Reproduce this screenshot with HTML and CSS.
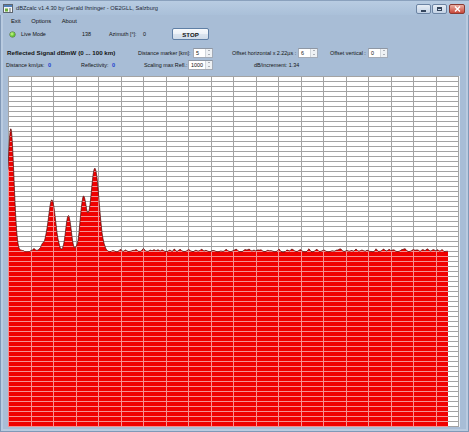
FILE: index.html
```html
<!DOCTYPE html>
<html lang="en">
<head>
  <meta charset="UTF-8">
  <title>dBZcalc</title>
  <link rel="stylesheet" href="styles.css">
</head>
<body>
  <div class="window">
    <!-- Title bar -->
    <div class="titlebar">
      <svg class="app-icon" width="10" height="9" viewBox="0 0 10 9">
        <rect x="0.5" y="0.5" width="9" height="8" fill="#f4f6f8" stroke="#5d6670"/>
        <rect x="1" y="1" width="8" height="2" fill="#4f7fb8"/>
        <rect x="2" y="4.5" width="3" height="3" fill="#6cae3c"/>
        <rect x="6" y="4.5" width="2" height="1" fill="#5d6670"/>
        <rect x="6" y="6.5" width="2" height="1" fill="#5d6670"/>
      </svg>
      <span class="title">dBZcalc v1.4.30 by Gerald Ihninger - OE2GLL, Salzburg</span>
      <div class="caption-buttons">
        <span class="cap-btn cap-min"><i></i></span>
        <span class="cap-btn cap-max"><i></i></span>
        <span class="cap-btn cap-close">
          <svg width="7" height="6" viewBox="0 0 7 6"><path d="M1 0.5 L6 5.5 M6 0.5 L1 5.5" stroke="#fff" stroke-width="1.4"/></svg>
        </span>
      </div>
    </div>

    <!-- Menu -->
    <div class="menubar">
      <span>Exit</span>
      <span>Options</span>
      <span>About</span>
    </div>

    <!-- Live mode row -->
    <div class="row row-live">
      <span class="led"></span>
      <span class="live-label">Live Mode</span>
      <span class="count">138</span>
      <span class="az-label">Azimuth [°]:</span>
      <span class="az-value">0</span>
      <button class="stop-btn">STOP</button>
    </div>

    <!-- Signal row -->
    <div class="row row-signal">
      <span class="signal-title">Reflected Signal dBmW (0 ... 100 km)</span>
      <span class="marker-label">Distance marker [km]:</span>
      <div class="spin"><span class="spin-val">5</span><span class="spin-arrows"><i class="up"></i><i class="down"></i></span></div>
      <span class="hoff-label">Offset horizontal x 2.22µs :</span>
      <div class="spin"><span class="spin-val">6</span><span class="spin-arrows"><i class="up"></i><i class="down"></i></span></div>
      <span class="voff-label">Offset vertical :</span>
      <div class="spin"><span class="spin-val">0</span><span class="spin-arrows"><i class="up"></i><i class="down"></i></span></div>
    </div>

    <!-- Info row -->
    <div class="row row-info">
      <span class="dist-label">Distance km/µs:</span>
      <span class="value dist-value">0</span>
      <span class="refl-label">Reflectivity:</span>
      <span class="value refl-value">0</span>
      <span class="scale-label">Scaling max Refl.:</span>
      <div class="spin spin-wide"><span class="spin-val">1000</span><span class="spin-arrows"><i class="up"></i><i class="down"></i></span></div>
      <span class="incr-label">dB/increment: 1.34</span>
    </div>

    <!-- Chart -->
    <div class="chart" id="chart"></div>
  </div>

  <script>
    // Build the reflection chart
    function buildChart() {
      const W = 451, H = 351, END = 440;
      let seed = 12345;
      function rnd() {
        seed = (seed * 16807) % 2147483647;
        return seed / 2147483647;
      }

      // echo peaks: [center, height, width]
      const peaks = [[2.8, 123, 3.1], [36, 5, 4], [44, 51, 3.5], [60.3, 35, 2.6], [75.5, 54, 3], [87, 82, 4.1]];

      // small clutter bumps along the noise floor
      for (let x = 14; x < END; x += 3 + rnd() * 6) {
        peaks.push([x, 0.6 + rnd() * 2.2, 0.8 + rnd() * 0.8]);
      }

      function level(x) {
        let y = 175.5;
        peaks.forEach(([c, a, s]) => {
          y -= a * Math.exp(-((x - c) * (x - c)) / (2 * s * s));
        });
        return y;
      }

      const pts = [];
      let jitter = 0;
      for (let x = 0; x <= END; x += (x < 105 ? 0.5 : 1)) {
        jitter = jitter * 0.5 + (rnd() - 0.5) * 0.6;
        const y = level(x) + (x > 11 ? jitter : 0);
        pts.push(x.toFixed(1) + "," + y.toFixed(1));
      }

      const line = "M" + pts.join(" L");
      const area = "M0," + H + " L" + pts.join(" L") + " L" + END + "," + H + " Z";

      let grid = "";
      for (let i = 0; i <= 20; i++) {
        const x = Math.round(i * 22.5) + 0.5;
        grid += "M" + x + " 0 V" + H + " ";
      }
      for (let i = 0; i <= 70; i++) {
        const y = i * 5 + 0.5;
        grid += "M0 " + y + " H" + W + " ";
      }

      document.getElementById("chart").innerHTML =
        '<svg width="' + W + '" height="' + H + '" viewBox="0 0 ' + W + ' ' + H + '">' +
        '<defs><clipPath id="fillClip"><path d="' + area + '"/></clipPath></defs>' +
        '<rect width="' + W + '" height="' + H + '" fill="#ffffff"/>' +
        '<path d="' + grid + '" stroke="#a3a3a3" stroke-width="1" fill="none"/>' +
        '<path d="' + area + '" fill="#f00000"/>' +
        '<path d="' + grid + '" stroke="#f59090" stroke-width="1" fill="none" clip-path="url(#fillClip)"/>' +
        '<path d="' + line + '" stroke="#4a0a0a" stroke-width="0.7" fill="none"/>' +
        '</svg>';
    }

    buildChart();
  </script>
</body>
</html>
```

FILE: styles.css
```css
body {
  margin: 0;
  font-family: "Liberation Sans", Arial, sans-serif;
  color: #141414;
}

.window {
  width: 469px;
  height: 432px;
  box-sizing: border-box;
  background: #a8bdd6;
  box-shadow: inset 0 0 0 1px #8098b6, inset 0 0 0 3px #b9cbe0;
  display: flex;
  flex-direction: column;
  overflow: hidden;
}

/* Title bar */
.titlebar {
  height: 15px;
  flex-shrink: 0;
  display: flex;
  align-items: center;
  padding: 0 4px 0 3px;
  background: linear-gradient(#b8cce2, #aac0d9);
  border-top: 1px solid #8aa1bd;
  box-sizing: border-box;
}

.app-icon {
  flex-shrink: 0;
}

.title {
  font-size: 5.7px;
  margin-left: 3px;
  color: #1e2a38;
  white-space: nowrap;
}

.caption-buttons {
  margin-left: auto;
  align-self: flex-start;
  margin-top: 3px;
  display: flex;
}

.cap-btn {
  width: 15px;
  height: 10px;
  box-sizing: border-box;
  border: 1px solid #6c84a3;
  border-radius: 2px;
  background: linear-gradient(#e6edf5, #c3d2e5);
  display: flex;
  align-items: center;
  justify-content: center;
  margin-left: 1px;
}

.cap-min i {
  width: 5px;
  height: 2px;
  margin-top: 3px;
  background: #34455c;
}

.cap-max i {
  width: 5px;
  height: 4px;
  box-sizing: border-box;
  border: 1px solid #34455c;
  border-top-width: 2px;
}

.cap-close {
  width: 16px;
  margin-left: 2px;
  border-color: #8a3a32;
  background: linear-gradient(#eab0a4, #c9473a);
}

/* Menu */
.menubar {
  height: 12px;
  flex-shrink: 0;
  display: flex;
  align-items: center;
  gap: 10.5px;
  padding-left: 11px;
  font-size: 5.8px;
}

/* Control rows */
.row {
  display: flex;
  align-items: center;
  flex-shrink: 0;
  font-size: 5.4px;
  white-space: nowrap;
}

.row > * {
  flex-shrink: 0;
}

.row-live {
  height: 12px;
  margin-top: 1px;
}

.row-signal {
  height: 11px;
  margin-top: 7px;
}

.row-info {
  height: 11px;
  margin-top: 1px;
}

.led {
  width: 5px;
  height: 5px;
  margin-left: 10px;
  border-radius: 50%;
  background: radial-gradient(circle at 40% 40%, #d4fa96, #62c42c 55%, #3c7d1c);
  box-shadow: 0 0 0 0.5px #50702c;
}

.live-label { margin-left: 6px; width: 61px; }
.count { width: 27px; }
.az-label { width: 34px; }
.az-value { width: 29px; }

.stop-btn {
  width: 37px;
  height: 12px;
  box-sizing: border-box;
  padding: 0;
  border: 1px solid #5f7fa5;
  border-radius: 2px;
  background: linear-gradient(#f6f9fc 0%, #ecf1f7 50%, #dbe4ef 51%, #d0dce9 100%);
  font-family: "Liberation Sans", Arial, sans-serif;
  font-weight: bold;
  font-size: 6.1px;
  color: #111;
}

.signal-title {
  margin-left: 7px;
  width: 131px;
  font-weight: bold;
  font-size: 6.2px;
}

.marker-label { width: 55px; }
.hoff-label { margin-left: 19px; width: 66px; }
.voff-label { margin-left: 12px; width: 38px; }

.dist-label { margin-left: 6px; width: 42px; }
.dist-value { width: 33px; }
.refl-label { width: 31px; }
.refl-value { width: 32px; }
.scale-label { width: 44px; }
.incr-label { margin-left: 41px; }

.value {
  color: #1d3fcf;
  font-weight: bold;
  font-size: 5.6px;
}

/* Numeric spin box */
.spin {
  width: 20px;
  height: 10px;
  box-sizing: border-box;
  border: 1px solid #a3abb7;
  border-top-color: #8e97a4;
  background: #fff;
  display: flex;
  align-items: center;
}

.spin-wide {
  width: 25px;
}

.spin-val {
  flex: 1;
  padding-left: 2px;
  font-size: 5.4px;
}

.spin-arrows {
  width: 6px;
  height: 100%;
  background: #eef1f4;
  border-left: 1px solid #d0d5db;
  display: flex;
  flex-direction: column;
  align-items: center;
  justify-content: space-around;
}

.spin-arrows i {
  width: 0;
  height: 0;
  border-left: 1.5px solid transparent;
  border-right: 1.5px solid transparent;
}

.spin-arrows .up {
  border-bottom: 1.5px solid #6a717b;
}

.spin-arrows .down {
  border-top: 1.5px solid #6a717b;
}

/* Chart */
.chart {
  margin-top: 6px;
  margin-left: 8px;
  width: 451px;
  height: 351px;
  border-right: 1px solid #eef3f9;
  flex-shrink: 0;
}

.chart svg {
  display: block;
}
```
